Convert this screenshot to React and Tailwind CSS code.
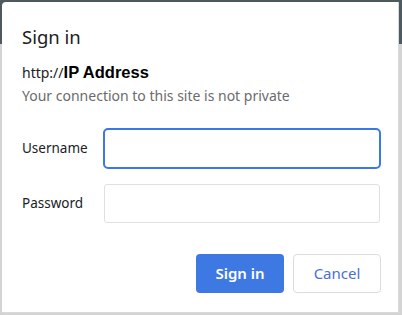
import React from 'react';

const App = () => {
  return (
    <div className="w-[402px] h-[315px] bg-[linear-gradient(to_bottom,#4f5a60_44px,#d4d4d4_44px)] pt-[2px] pl-[2px] pr-[3px] pb-[2px] font-['Noto_Sans',sans-serif]">
      <div className="h-full bg-white rounded-tl-[4px] border-b border-r border-[#d9d9d9] pl-[20px] pr-[17px] pt-[22px]">
        <h1 className="text-[18.5px] leading-[26px] text-[#202124]">Sign in</h1>
        <p className="mt-[12px] text-[14px] leading-[20px] text-[#202124]">
          http://<span className="font-['Liberation_Sans',sans-serif] font-bold text-[16.5px] text-black">IP Address</span>
        </p>
        <p className="mt-[3px] text-[14px] leading-[20px] text-[#6b6b6b]">
          Your connection to this site is not private
        </p>

        <div className="mt-[22px] flex items-center">
          <label className="w-[81px] text-[13.5px] text-[#202124]">Username</label>
          <input
            type="text"
            className="flex-1 h-[41px] rounded-[5px] border-2 border-[#3b78e7] outline-none px-2"
          />
        </div>
        <div className="mt-[15px] flex items-center">
          <label className="w-[82px] text-[13.5px] text-[#202124]">Password</label>
          <input
            type="password"
            className="flex-1 mr-[1px] h-[39px] rounded-[3px] border border-[#e0e0e0] outline-none px-2"
          />
        </div>

        <div className="mt-[31px] flex justify-end gap-[9px]">
          <button className="w-[88px] h-[39px] rounded-[4px] bg-[#3e78e3] text-white text-[15px] font-semibold">
            Sign in
          </button>
          <button className="w-[88px] h-[39px] rounded-[4px] border border-[#dcdcdc] bg-white text-[#4a6fd8] text-[15px]">
            Cancel
          </button>
        </div>
      </div>
    </div>
  );
};

export default App;
